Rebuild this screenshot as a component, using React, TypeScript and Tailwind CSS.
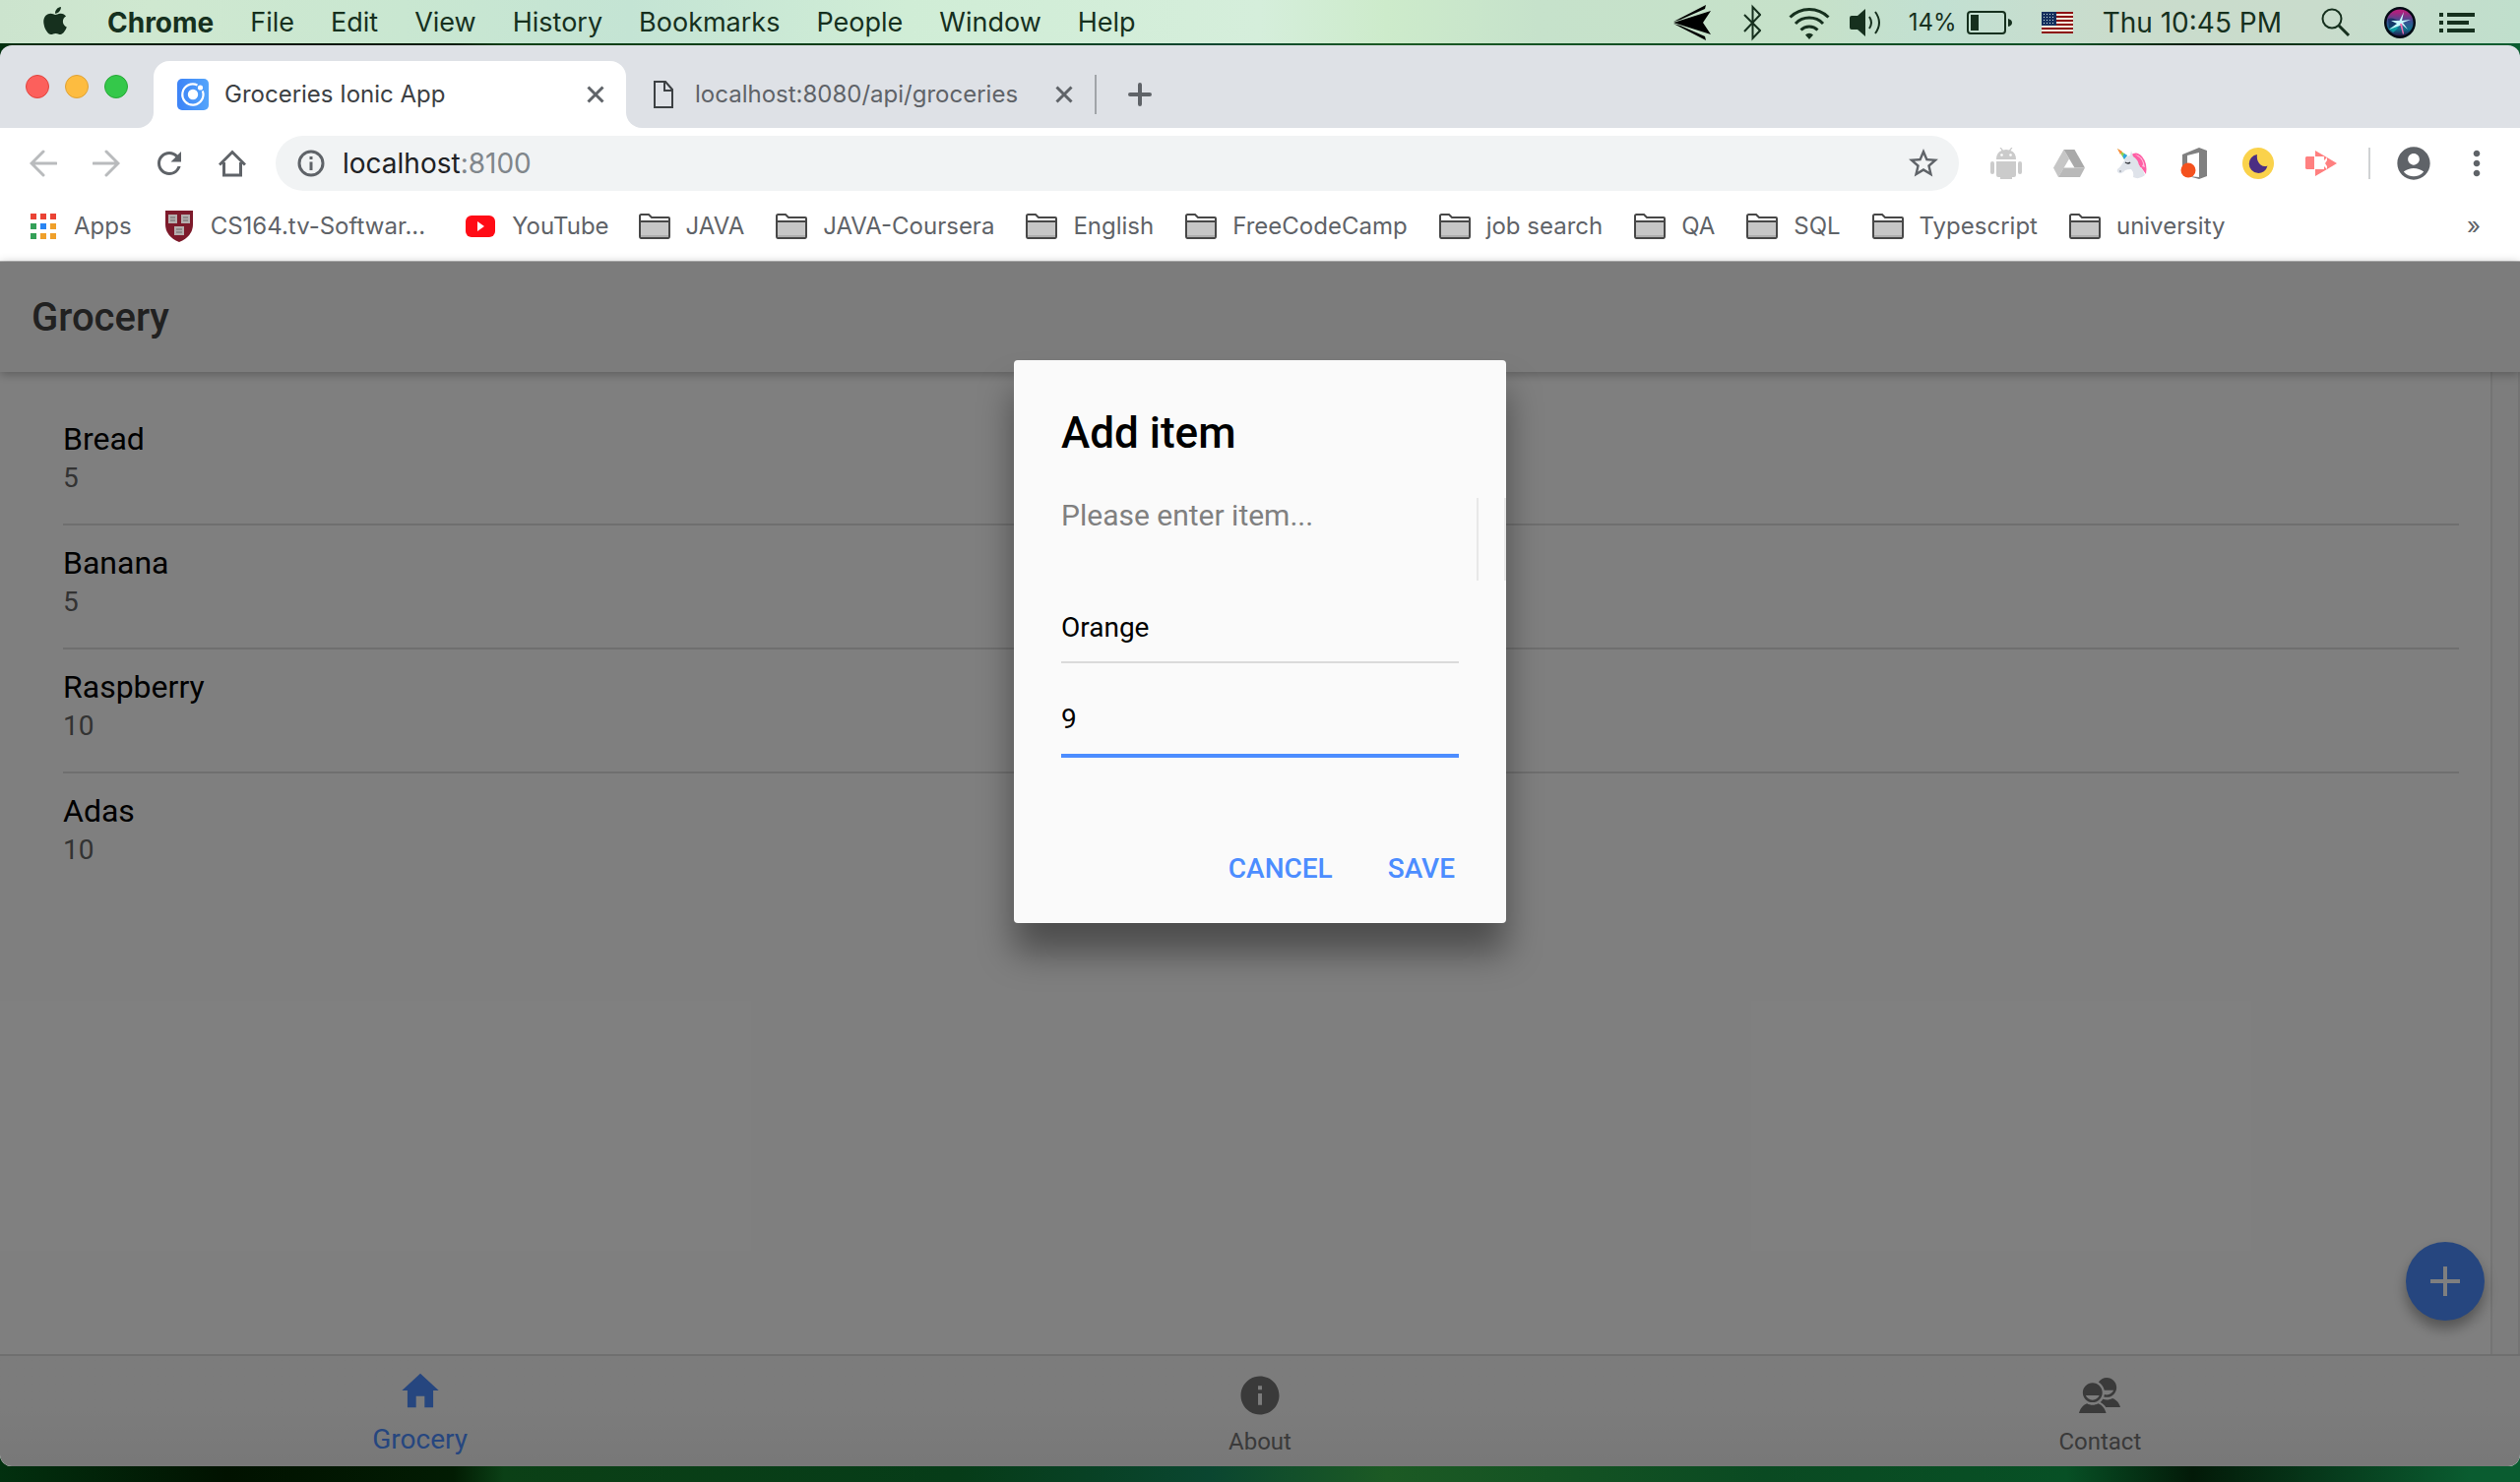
import React from "react";
import { FaApple } from "react-icons/fa";
import { MdAccountCircle, MdMoreVert, MdRefresh, MdStarBorder } from "react-icons/md";
import { IoMdContacts, IoMdHome, IoMdInformationCircle } from "react-icons/io";

const menus = ["File", "Edit", "View", "History", "Bookmarks", "People", "Window", "Help"];

const folders = [
  "JAVA",
  "JAVA-Coursera",
  "English",
  "FreeCodeCamp",
  "job search",
  "QA",
  "SQL",
  "Typescript",
  "university",
];

const groceries = [
  { name: "Bread", quantity: 5 },
  { name: "Banana", quantity: 5 },
  { name: "Raspberry", quantity: 10 },
  { name: "Adas", quantity: 10 },
];

function PlaneIcon() {
  return (
    <svg viewBox="0 0 40 40" className="h-10 w-10" fill="#000" aria-hidden="true">
      <path d="M1 20 39 8 31 20 39 32Z" />
      <path d="M1 19 34 2 33 6 8 17Z" />
      <path d="M1 21 34 38 33 34 8 23Z" />
    </svg>
  );
}

function BluetoothIcon() {
  return (
    <svg viewBox="0 0 18 40" className="h-10 w-[18px]" fill="none" stroke="#16301e" strokeWidth="2" aria-hidden="true">
      <path d="M1 12 17 28 9.500 36V4L17 12 1 29" strokeLinejoin="miter" />
    </svg>
  );
}

function WifiIcon() {
  return (
    <svg viewBox="0 0 42 38" className="h-[38px] w-[42px]" fill="none" stroke="#16301e" strokeWidth="3" aria-hidden="true">
      <path d="M1.500 13.500a27.500 27.500 0 0 1 39 0" />
      <path d="M7 20a19.500 19.500 0 0 1 28 0" />
      <path d="M12.500 26.500a12 12 0 0 1 17 0" />
      <path d="M17 31.500a5.600 5.600 0 0 1 8 0L21 36Z" fill="#16301e" stroke="none" />
    </svg>
  );
}

function VolumeIcon() {
  return (
    <svg viewBox="0 0 34 32" className="h-8 w-[34px]" fill="none" stroke="#16301e" strokeWidth="2" aria-hidden="true">
      <path d="M2 9h6l8-7v28l-8-7H2a2 2 0 0 1-2-2V11a2 2 0 0 1 2-2Z" fill="#16301e" stroke="none" />
      <path d="M20 10q4 6 0 12M26 5q8 11 0 22" />
    </svg>
  );
}

function BatteryIcon() {
  return (
    <svg viewBox="0 0 46 24" className="h-6 w-[46px]" aria-hidden="true">
      <rect x="1" y="1" width="38" height="22" rx="3" fill="none" stroke="#16301e" strokeWidth="2" />
      <rect x="4" y="4" width="8" height="16" fill="#16301e" />
      <path d="M42 8q4 1 4 4t-4 4Z" fill="#16301e" />
    </svg>
  );
}

function FlagIcon() {
  return (
    <svg viewBox="0 0 32 22" className="h-[22px] w-8" aria-hidden="true">
      <rect width="32" height="22" fill="#f1e9dc" />
      {[0, 1, 2, 3, 4, 5].map((i) => (
        <rect key={i} y={i * 4} width="32" height="2" fill="#8d1214" />
      ))}
      <rect width="15" height="14" fill="#16305f" />
      {[2, 5, 8, 11].map((y) =>
        [2, 5, 8, 11].map((x) => <rect key={`${x}-${y}`} x={x} y={y} width="1" height="1" fill="#cfe6dd" />),
      )}
    </svg>
  );
}

function SearchIcon() {
  return (
    <svg viewBox="0 0 30 30" className="h-[30px] w-[30px]" fill="none" stroke="#16301e" aria-hidden="true">
      <circle cx="11" cy="11" r="9.500" strokeWidth="2" />
      <path d="m18 18 10 10" strokeWidth="3" />
    </svg>
  );
}

function SiriIcon() {
  return (
    <svg viewBox="0 0 32 32" className="h-8 w-8" aria-hidden="true">
      <defs>
        <linearGradient id="siri" x1="0" y1="0" x2="0" y2="1">
          <stop offset="0.100" stopColor="#b0207e" />
          <stop offset="0.450" stopColor="#3a4f93" />
          <stop offset="0.750" stopColor="#126f8c" />
          <stop offset="1" stopColor="#28164a" />
        </linearGradient>
      </defs>
      <circle cx="16" cy="16" r="16" fill="#020a14" />
      <circle cx="16" cy="16" r="13.500" fill="url(#siri)" />
      <path d="M4 12q6-2 12 4-6 8-11 6Z" fill="#0a2c58" opacity="0.700" />
      <path d="M5 22Q12 18 16 16 15 22 9 26Z" fill="#08b5b0" opacity="0.700" />
      <path d="m15.500 14 4.500-9-2 9 9-1-8 3 5 7-6-5-2 1-11 4 8-6-6-3Z" fill="#c9fbff" />
      <path d="m16 17 3 11 1-1-2-10Z" fill="#f26fb3" />
    </svg>
  );
}

function ListIcon() {
  return (
    <svg viewBox="0 0 36 20" className="h-5 w-9" fill="#16301e" aria-hidden="true">
      <path d="M0 0h4v4H0zM8 0h28v4H8zM0 8h4v4H0zM8 8h22v4H8zM0 16h4v4H0zM8 16h28v4H8z" />
    </svg>
  );
}

function IonicIcon() {
  return (
    <svg viewBox="0 0 32 32" className="h-8 w-8" aria-hidden="true">
      <defs>
        <linearGradient id="ionic" x1="0" y1="0" x2="1" y2="0">
          <stop offset="0" stopColor="#3d83f7" />
          <stop offset="1" stopColor="#54a5fb" />
        </linearGradient>
      </defs>
      <rect width="32" height="32" rx="5" fill="url(#ionic)" />
      <path d="M20.500 6.500a10.600 10.600 0 1 0 5.300 5.800" fill="none" stroke="#fff" strokeWidth="2.200" />
      <circle cx="16" cy="16" r="5.200" fill="#fff" />
      <circle cx="23.500" cy="9" r="2.600" fill="#fff" />
    </svg>
  );
}

function DocumentIcon() {
  return (
    <svg viewBox="0 0 20 28" className="h-7 w-5" fill="none" stroke="#3c4043" strokeWidth="2" aria-hidden="true">
      <path d="M1 1h11l7 8v18H1ZM11 1v9h8" />
    </svg>
  );
}

function CrossIcon() {
  return (
    <svg viewBox="0 0 18 18" className="h-[18px] w-[18px]" fill="none" stroke="#5f6368" strokeWidth="3" aria-hidden="true">
      <path d="m1.500 1.500 15 15m0-15-15 15" />
    </svg>
  );
}

function ArrowIcon({ forward = false }: { forward?: boolean }) {
  return (
    <svg viewBox="0 0 28 28" className="h-7 w-7" fill="none" stroke="#b9bbbd" strokeWidth="3" aria-hidden="true">
      <path d={forward ? "M1 14h24M14 2l12 12-12 12" : "M27 14H3M14 2 2 14l12 12"} strokeLinecap="round" />
    </svg>
  );
}

function HomeOutlineIcon() {
  return (
    <svg viewBox="0 0 28 28" className="h-7 w-7" fill="none" stroke="#5f6368" strokeWidth="3" aria-hidden="true">
      <path d="M1 15.500 14 2.500l13 13M5.500 13v13h17V13" />
    </svg>
  );
}

function InfoOutlineIcon() {
  return (
    <svg viewBox="0 0 28 28" className="h-7 w-7" fill="none" stroke="#5f6368" strokeWidth="3" aria-hidden="true">
      <circle cx="14" cy="14" r="12" />
      <path d="M14 12.500V21M14 7v3" />
    </svg>
  );
}

function AndroidIcon() {
  return (
    <svg viewBox="0 0 32 32" className="h-8 w-8" fill="#cbcbcb" aria-hidden="true">
      <path d="M6 12q0-7 5.500-9L9.500 0l1-.5L13 2.500q3-1 6 0L21.500-.5l1 .5-2 3Q26 5 26 12Z" />
      <circle cx="11.500" cy="7.500" r="1.300" fill="#fff" />
      <circle cx="20.500" cy="7.500" r="1.300" fill="#fff" />
      <path d="M6 14h20v14q0 2-2 2h-2v2H10v-2H8q-2 0-2-2Z" />
      <rect y="14" width="4" height="13" rx="2" />
      <rect x="28" y="14" width="4" height="13" rx="2" />
    </svg>
  );
}

function DriveIcon() {
  return (
    <svg viewBox="0 0 32 28" className="h-7 w-8" aria-hidden="true">
      <path d="M10.500 0 0 18.500 5 28l11-18.500Z" fill="#c6c6c6" />
      <path d="M10.500 0h11L32 18.500H21.500Z" fill="#a9a9a9" />
      <path d="M10.500 18.500H32L27 28H5Z" fill="#b9b9b9" />
    </svg>
  );
}

function UnicornIcon() {
  return (
    <svg viewBox="0 0 32 32" className="h-8 w-8" aria-hidden="true">
      <path d="M15 7Q21 3 26 9q6 7 4 18l-5-7-8-8Z" fill="#ff5fa5" />
      <path d="M19 7q6 3 7 12l3 1Q27 8 19 7Z" fill="#ffc1dc" />
      <path d="m1 1 10 7-3 4Z" fill="#8fd14f" />
      <path d="m1 1 5 3-2 3Z" fill="#ff8a3c" />
      <path d="m8 6 3 2-3 4-1.500-3Z" fill="#2ea6e6" />
      <path d="M9 11q2-3 5-3l1-5 2 6q5 3 6 9 4 4 6 10-6 5-12 2 1-5-2-8-4 0-6 1-3 4-6 3-3-1-2-4 5-4 8-11Z" fill="#dfe3ea" />
      <path d="M9 15q3 2 5 0" fill="none" stroke="#30343b" strokeWidth="1.500" />
      <path d="M3 24h2" stroke="#8a8f98" />
      <path d="M19 8q5 6 5 12 3-1 3-4-2-7-8-8Z" fill="#ff5fa5" />
    </svg>
  );
}

function OfficeIcon() {
  return (
    <svg viewBox="0 0 32 32" className="h-8 w-8" aria-hidden="true">
      <path d="M3 7 20 0l8 3v26l-8 3-11-3 11 1V5L8 8v12l-5 3Z" fill="#808080" />
      <circle cx="9" cy="23" r="7.500" fill="#f4511e" />
    </svg>
  );
}

function MoonIcon() {
  return (
    <svg viewBox="0 0 32 32" className="h-8 w-8" aria-hidden="true">
      <circle cx="16" cy="16" r="16" fill="#fad24b" />
      <path d="M15 7a9.500 9.500 0 1 0 10.500 11.500Q22 20 18.500 17.500 14 13 15 7Z" fill="#4b2e83" />
    </svg>
  );
}

function CastIcon() {
  return (
    <svg viewBox="0 0 32 28" className="h-7 w-8" fill="#ff8080" aria-hidden="true">
      <path d="M1 7h8v13H1l-1-1V8Z" />
      <path d="m10 1 12 7-3 3V7h-9ZM10 27l12-7-3-3v3h-9ZM22 8l10 6-10 6v-3l-2-3 2-3Z" />
    </svg>
  );
}

function AppsIcon() {
  const colors = ["#ea4335", "#ea4335", "#ea4335", "#34a058", "#2a85f2", "#efa02b", "#34a058", "#efa02b", "#efa02b"];
  return (
    <svg viewBox="0 0 26 26" className="h-[26px] w-[26px]" aria-hidden="true">
      {colors.map((color, i) => (
        <rect key={i} x={(i % 3) * 10} y={Math.floor(i / 3) * 10} width="6" height="6" fill={color} />
      ))}
    </svg>
  );
}

function ShieldIcon() {
  return (
    <svg viewBox="0 0 32 32" className="h-8 w-8" aria-hidden="true">
      <path d="M2 0h28v14q0 12-14 18Q2 26 2 14Z" fill="#7d1a2b" />
      <path d="M5 4h9v9H5zM18 4h9v9h-9zM11 16h10v9H11z" fill="#b5aeae" />
      <path d="M7 7h5M7 10h5M20 7h5M20 10h5M13 19h6M13 22h6" stroke="#6d6668" />
    </svg>
  );
}

function YouTubeIcon() {
  return (
    <svg viewBox="0 0 32 24" className="h-6 w-8" aria-hidden="true">
      <rect x="1" y="1" width="30" height="22" rx="6" fill="#ff0c16" />
      <path d="m13 7 7 5-7 5Z" fill="#fff" />
    </svg>
  );
}

function FolderIcon() {
  return (
    <svg viewBox="0 0 32 26" className="h-[26px] w-8" stroke="#474747" strokeWidth="2" aria-hidden="true">
      <path d="M1 8V2.500Q1 1 2.500 1H10l3 3h17q1 0 1 1v3" fill="#fff" />
      <path d="M1 8h30v15q0 2-1.500 2h-27Q1 25 1 23Z" fill="#c6c6c6" />
      <path d="M2 23h28" stroke="#adadad" />
    </svg>
  );
}

function MenuBar() {
  return (
    <header className="flex h-11 shrink-0 items-center bg-[linear-gradient(90deg,#cce4ce_0%,#cfe8d0_6%,#c9e7d1_16%,#c4e4d4_25%,#d0edd6_36%,#d5eedb_50%,#cdebcb_55%,#c6e2cb_61%,#c6e1c9_72%,#c2e0d2_77%,#cadccc_84%,#c9dccc_92%,#c0dfcc_100%)] pt-0.5 pr-[46px] pl-10 text-[#16301e]">
      <nav className="flex items-center gap-[37px] text-[27px]" aria-label="Menu bar">
        <button aria-label="Apple menu">
          <FaApple className="mb-1 h-8 w-8" />
        </button>
        <button className="text-[28px] font-bold">Chrome</button>
        {menus.map((menu) => (
          <button key={menu}>{menu}</button>
        ))}
      </nav>
      <div className="ml-auto flex items-center">
        <PlaneIcon />
        <span className="ml-8">
          <BluetoothIcon />
        </span>
        <span className="ml-7">
          <WifiIcon />
        </span>
        <span className="ml-5">
          <VolumeIcon />
        </span>
        <span className="ml-[26px] text-[24px]">14%</span>
        <span className="ml-2.5">
          <BatteryIcon />
        </span>
        <span className="ml-[30px]">
          <FlagIcon />
        </span>
        <time className="ml-[30px] text-[28px]">Thu 10:45 PM</time>
        <button aria-label="Search" className="ml-10">
          <SearchIcon />
        </button>
        <button aria-label="Siri" className="ml-[34px]">
          <SiriIcon />
        </button>
        <button aria-label="Notification center" className="ml-6">
          <ListIcon />
        </button>
      </div>
    </header>
  );
}

function TabStrip() {
  return (
    <div className="flex h-[84px] shrink-0 items-end bg-[#dee1e6]">
      <div className="flex h-[68px] w-[156px] items-center gap-4 pb-4 pl-[26px]">
        <button aria-label="Close window" className="size-6 rounded-full border border-[#e0443e] bg-[#fc605c]" />
        <button aria-label="Minimize window" className="size-6 rounded-full border border-[#dea236] bg-[#fdbc40]" />
        <button aria-label="Zoom window" className="size-6 rounded-full border border-[#27a837] bg-[#34c84a]" />
      </div>
      <div className="relative flex h-[68px] w-[480px] items-center rounded-t-2xl bg-white pr-[22px] pl-6">
        <span className="absolute bottom-0 left-[-16px] size-4 bg-white">
          <span className="block size-4 rounded-br-2xl bg-[#dee1e6]" />
        </span>
        <span className="absolute right-[-16px] bottom-0 size-4 bg-white">
          <span className="block size-4 rounded-bl-2xl bg-[#dee1e6]" />
        </span>
        <IonicIcon />
        <span className="ml-4 text-[24px] text-[#3c4043]">Groceries Ionic App</span>
        <button aria-label="Close tab" className="ml-auto">
          <CrossIcon />
        </button>
      </div>
      <div className="flex h-[68px] w-[476px] items-center pr-[22px] pl-7">
        <DocumentIcon />
        <span className="ml-[22px] text-[24px] text-[#5f6368]">localhost:8080/api/groceries</span>
        <button aria-label="Close tab" className="ml-auto">
          <CrossIcon />
        </button>
      </div>
      <div className="flex h-[68px] items-center">
        <span className="h-10 w-[2px] bg-[#a0a4a8]" />
        <button aria-label="New tab" className="ml-8">
          <svg viewBox="0 0 24 24" className="h-6 w-6" stroke="#5f6368" strokeWidth="4" strokeLinecap="round">
            <path d="M12 2v20M2 12h20" />
          </svg>
        </button>
      </div>
    </div>
  );
}

function AddressBar() {
  return (
    <div className="flex h-[72px] shrink-0 items-center bg-white pl-[30px] text-[#5f6368]">
      <div className="flex w-[250px] items-center gap-9">
        <button aria-label="Back">
          <ArrowIcon />
        </button>
        <button aria-label="Forward">
          <ArrowIcon forward />
        </button>
        <button aria-label="Reload" className="-mx-1">
          <MdRefresh className="size-9" />
        </button>
        <button aria-label="Home">
          <HomeOutlineIcon />
        </button>
      </div>
      <div className="flex h-14 flex-1 items-center rounded-full bg-[#f1f3f4] pr-[18px] pl-[22px]">
        <InfoOutlineIcon />
        <div className="ml-[18px] text-[28px] text-[#202124]">
          localhost<span className="text-[#80868b]">:8100</span>
        </div>
        <button aria-label="Bookmark this page" className="ml-auto">
          <MdStarBorder className="size-9" />
        </button>
      </div>
      <div className="ml-8 flex items-center gap-8">
        <AndroidIcon />
        <DriveIcon />
        <UnicornIcon />
        <OfficeIcon />
        <MoonIcon />
        <CastIcon />
        <span className="h-8 w-[2px] bg-[#d0d2d4]" />
      </div>
      <button aria-label="Profile" className="ml-6">
        <MdAccountCircle className="size-10" />
      </button>
      <button aria-label="Chrome menu" className="mr-6 ml-6">
        <MdMoreVert className="size-10" />
      </button>
    </div>
  );
}

function BookmarksBar() {
  return (
    <nav
      aria-label="Bookmarks"
      className="flex h-16 shrink-0 items-center border-b border-[#b6b6b6] bg-white pb-2 pl-[31px] text-[24px] text-[#5f6368]"
    >
      <a href="#apps" className="flex items-center gap-[18px]">
        <AppsIcon />
        Apps
      </a>
      <a href="#cs164" className="ml-8 flex items-center gap-4">
        <ShieldIcon />
        CS164.tv-Softwar...
      </a>
      <a href="#youtube" className="mr-[30px] ml-10 flex items-center gap-4">
        <YouTubeIcon />
        YouTube
      </a>
      <div className="flex items-center gap-8">
        {folders.map((folder) => (
          <a key={folder} href="#folder" className="flex items-center gap-4">
            <FolderIcon />
            {folder}
          </a>
        ))}
      </div>
      <button aria-label="More bookmarks" className="mr-10 ml-auto">
        »
      </button>
    </nav>
  );
}

function GroceryPage() {
  return (
    <div className="flex flex-1 flex-col bg-white">
      <div className="z-10 flex h-28 shrink-0 items-center bg-[#f8f8f8] px-8 pt-0.5 shadow-[0_2px_10px_rgba(0,0,0,0.3)]">
        <h1 className="text-[40px] font-medium text-[#424242]">Grocery</h1>
      </div>
      <main className="relative flex flex-1">
        <ul className="flex-1 px-8 pt-[30px]">
          {groceries.map((item, index) => (
            <li key={item.name} className="pl-8">
              <div
                className={
                  index < groceries.length - 1
                    ? "h-[126px] border-b-2 border-[#dedede] pt-[18px]"
                    : "h-[126px] pt-[18px]"
                }
              >
                <h2 className="text-[32px] leading-10 text-black">{item.name}</h2>
                <p className="text-[28px] leading-10 text-[#666]">{item.quantity}</p>
              </div>
            </li>
          ))}
        </ul>
        <div className="w-[30px] border-x-2 border-[#e8e8e8] bg-[#fafafa]" />
        <button
          aria-label="Add grocery"
          className="absolute right-9 bottom-[34px] flex size-20 items-center justify-center rounded-full bg-[#4c8dff] shadow-[0_8px_14px_rgba(0,0,0,0.35)]"
        >
          <svg viewBox="0 0 30 30" className="size-[30px]" stroke="#fff" strokeWidth="4">
            <path d="M15 0v30M0 15h30" />
          </svg>
        </button>
      </main>
      <nav
        aria-label="Sections"
        className="grid h-[114px] shrink-0 grid-cols-3 border-t-2 border-[#dedede] bg-linear-to-b from-[#f8f8f8] from-50% to-[#f0f0f0] text-[24px] text-[#747474]"
      >
        <button className="flex flex-col items-center pt-3 text-[28px] text-[#4c8dff]">
          <IoMdHome className="size-[46px]" />
          <span className="mt-2 leading-[38px]">Grocery</span>
        </button>
        <button className="flex flex-col items-center pt-4">
          <IoMdInformationCircle className="size-12" />
          <span className="mt-1 leading-[38px]">About</span>
        </button>
        <button className="flex flex-col items-center pt-4">
          <IoMdContacts className="size-12" />
          <span className="mt-1 leading-[38px]">Contact</span>
        </button>
      </nav>
    </div>
  );
}

function AddItemDialog() {
  return (
    <div className="absolute inset-0 z-20 flex items-start justify-center bg-black/50 pt-[100px]">
      <div
        role="dialog"
        aria-labelledby="dialog-title"
        className="flex w-[500px] flex-col rounded bg-[#fafafa] shadow-[0_30px_36px_rgba(0,0,0,0.4)]"
      >
        <h2 id="dialog-title" className="px-12 pt-12 pb-10 text-[44px] leading-[52px] font-medium text-black">
          Add item
        </h2>
        <div className="flex h-[84px]">
          <p className="flex-1 pl-12 text-[30px] leading-9 text-[#808080]">Please enter item...</p>
          <div className="w-[30px] border-x-2 border-[#e8e8e8]" />
        </div>
        <div className="px-12 pt-5">
          <input
            aria-label="Item name"
            defaultValue="Orange"
            className="h-16 w-full border-b-2 border-[#dadada] bg-transparent pb-2 text-[28px] text-black outline-none"
          />
          <input
            aria-label="Quantity"
            defaultValue="9"
            className="mt-7 h-[68px] w-full border-b-4 border-[#4c8dff] bg-transparent pb-2 text-[28px] text-black outline-none"
          />
        </div>
        <div className="mt-[82px] flex justify-end gap-4 pr-8 pb-6 text-[28px] font-medium text-[#4c8dff]">
          <button className="h-[62px] px-5">CANCEL</button>
          <button className="h-[62px] px-5">SAVE</button>
        </div>
      </div>
    </div>
  );
}

export default function App() {
  return (
    <div className="flex h-screen flex-col bg-[linear-gradient(90deg,#02300f_0%,#011200_9%,#021c03_18%,#0b4016_20%,#063c18_38%,#0a4630_48%,#1c5a24_55%,#0a4a22_70%,#075025_82%,#031a08_87%,#0a5c30_98%)] font-['Inter',sans-serif]">
      <MenuBar />
      <div className="mt-0.5 mb-4 flex min-h-0 flex-1 flex-col overflow-hidden rounded-[12px]">
        <TabStrip />
        <AddressBar />
        <BookmarksBar />
        <div className="relative flex min-h-0 flex-1 flex-col font-['Roboto',sans-serif]">
          <GroceryPage />
          <AddItemDialog />
        </div>
      </div>
    </div>
  );
}
